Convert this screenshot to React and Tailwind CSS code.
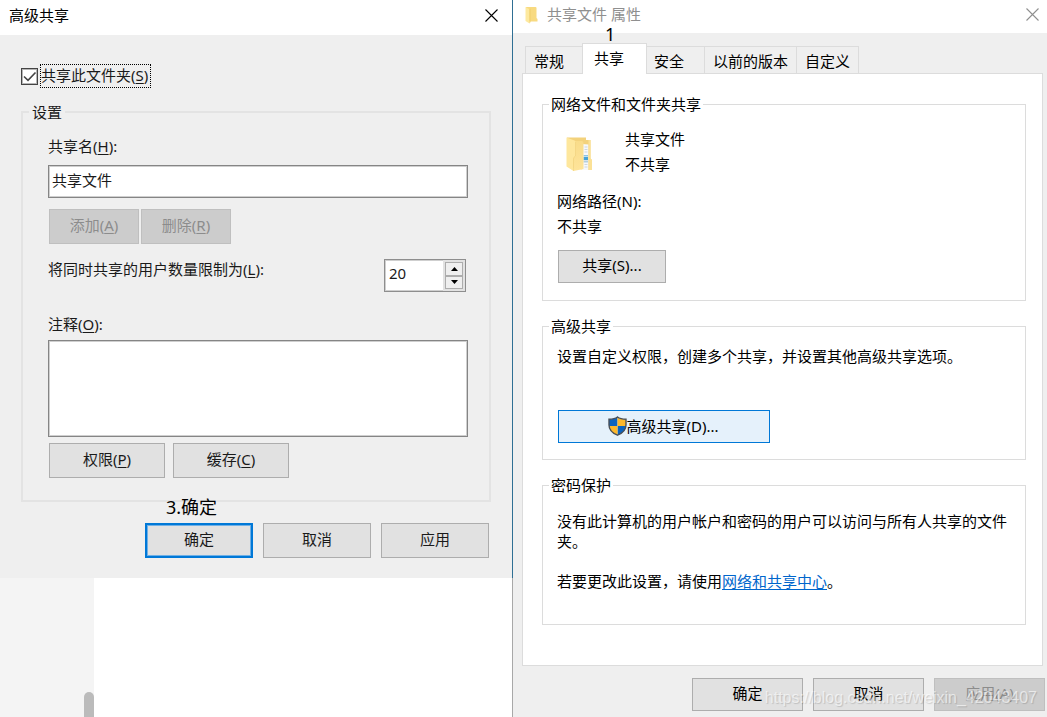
import { useState } from "react";
import clsx from "clsx";

const tabs = ["常规", "共享", "安全", "以前的版本", "自定义"];

function CloseIcon() {
  return (
    <svg width="13" height="13" viewBox="0 0 13 13" fill="none" stroke="currentColor" strokeWidth="1.1">
      <path d="M0.5 0.5 L12.5 12.5 M12.5 0.5 L0.5 12.5" />
    </svg>
  );
}

function SmallFolderIcon() {
  return (
    <svg width="13" height="18" viewBox="0 0 13 18">
      <path d="M1 1 H10.5 Q11.5 1 11.5 2 V12 L12.5 13 V15.5 H3 Z" fill="#f8da80" />
      <path d="M0.5 1 L4.5 3.2 V17.5 L0.5 15 Z" fill="#fde99f" />
      <path d="M4.5 3.2 L5.5 2.6 V16 L4.5 17.5 Z" fill="#efcd6a" />
    </svg>
  );
}

function FolderIcon() {
  return (
    <svg width="28" height="36" viewBox="0 0 28 36">
      <defs>
        <linearGradient id="front" x1="0" y1="0" x2="0" y2="1">
          <stop offset="0" stopColor="#f9dc8a" />
          <stop offset="1" stopColor="#fee49a" />
        </linearGradient>
      </defs>
      <path d="M2 1.5 H21 V4 H25.5 V22.5 L27 24 V34 H20 L4 31 Z" fill="#f3d27c" />
      <path d="M17 8 L23.5 8.5 V34 H17 Z" fill="#f6f8fb" />
      <path d="M19.5 11 h3 M19.5 13.5 h3 M19.5 16 h3 M19.5 31 h3 M19.5 28.5 h3" stroke="#cdd6de" strokeWidth="1" />
      <path d="M18.5 19 h4.5 v1.5 h-4.5 z" fill="#8cc4e4" />
      <path d="M18.5 21 h4.5 v3 h-4.5 z" fill="#46a3d9" />
      <path d="M18.5 24.5 h4.5 v2 h-4.5 z" fill="#b4cfdc" />
      <path d="M23.5 4 H25.5 V22.5 L27 24 V34 H23.5 Z" fill="#fbe196" />
      <path d="M9 5 L17 5 Q18.5 5.5 18.5 7 V33 L8.5 35 Z" fill="url(#front)" />
      <path d="M1.5 1.5 L9.5 4.5 Q10.5 5 10.5 6.5 V20 Q8.5 21 8.5 23 V35 L1.5 30.5 Z" fill="#fee79d" />
      <path d="M8.5 35 V23 Q8.5 21 10.5 20 V6" stroke="#f3d481" strokeWidth="0.8" fill="none" />
    </svg>
  );
}

function ShieldIcon() {
  return (
    <svg width="19" height="20" viewBox="0 0 19 20">
      <defs>
        <clipPath id="shield">
          <path d="M9.5 1 C7.5 2.6 4.5 3.3 1 3.3 V9 C1 14 4.5 17.2 9.5 19.2 C14.5 17.2 18 14 18 9 V3.3 C14.5 3.3 11.5 2.6 9.5 1 Z" />
        </clipPath>
      </defs>
      <g clipPath="url(#shield)">
        <path d="M0 0 H9.5 V10 H0 Z M9.5 10 H19 V20 H9.5 Z" fill="#0b63c0" />
        <path d="M9.5 0 H19 V10 H9.5 Z M0 10 H9.5 V20 H0 Z" fill="#fdb82c" />
      </g>
      <path
        d="M9.5 1 C7.5 2.6 4.5 3.3 1 3.3 V9 C1 14 4.5 17.2 9.5 19.2 C14.5 17.2 18 14 18 9 V3.3 C14.5 3.3 11.5 2.6 9.5 1 Z"
        fill="none"
        stroke="#4a5058"
        strokeWidth="1.4"
      />
    </svg>
  );
}

function Button({ className, primary, disabled, children }) {
  return (
    <button
      type="button"
      disabled={disabled}
      className={clsx(
        "flex items-center justify-center pb-[3px]",
        primary && "border-2 border-[#0078d7] bg-[#e1e1e1] shadow-[inset_0_0_0_1px_#6fb0e6]",
        !primary && !disabled && "border border-[#adadad] bg-[#e1e1e1]",
        disabled && "border border-[#bfbfbf] bg-[#cccccc] text-[#8c8c8c]",
        className
      )}
    >
      {children}
    </button>
  );
}

// Subrayado de la tecla de acceso
function Key({ children }) {
  return (
    <span>
      (<span className="underline underline-offset-2">{children}</span>)
    </span>
  );
}

function AdvancedDialog() {
  const [shared, setShared] = useState(true);
  const [limit, setLimit] = useState(20);

  return (
    <section className="border-r border-[#2f6f94] bg-[#efefef] text-[#1a1a1a]">
      <header className="flex h-[35px] items-center justify-between bg-white pr-[14px] pb-1 pl-[9px] text-black">
        <h2 className="pb-[2px]">高级共享</h2>
        <button type="button" aria-label="关闭">
          <CloseIcon />
        </button>
      </header>

      <div className="px-[21px] pt-[29px] pb-5">
        <label className="flex w-fit items-center gap-[2px]">
          <span className="grid">
            <input
              type="checkbox"
              checked={shared}
              onChange={(e) => setShared(e.target.checked)}
              className="col-start-1 row-start-1 size-[17px] appearance-none border border-[#444444] bg-white shadow-[inset_0_0_0_1px_#b5b5b5]"
            />
            {shared && (
              <svg className="pointer-events-none col-start-1 row-start-1" width="17" height="17" viewBox="0 0 17 17">
                <path d="M3 8.5 L7 12.3 L14.5 4.5" fill="none" stroke="#444444" strokeWidth="1.6" />
              </svg>
            )}
          </span>
          <span className="flex h-6 items-center border border-dotted border-black pr-[2px] pb-[2px]">
            共享此文件夹<Key>S</Key>
          </span>
        </label>

        <fieldset className="mt-[14px] border-2 border-[#e3e3e3]">
          <legend className="ml-[6px] px-[3px]">设置</legend>
          <div className="pt-[14px] pr-[21px] pb-[22px] pl-[25px]">
            <label htmlFor="share-name" className="block">
              共享名<Key>H</Key>:
            </label>
            <input
              id="share-name"
              type="text"
              defaultValue="共享文件"
              className="mt-[9px] block h-[33px] w-full border border-[#858585] bg-white px-[3px] pb-[5px] shadow-[inset_0_0_0_1px_#cfcfcf]"
            />
            <div className="mt-[11px] flex gap-[2px] px-px">
              <Button disabled className="h-[35px] w-[90px]">添加<Key>A</Key></Button>
              <Button disabled className="h-[35px] w-[90px]">删除<Key>R</Key></Button>
            </div>

            <div className="mt-[15px] flex items-start justify-between pr-[2px]">
              <label htmlFor="limit">
                将同时共享的用户数量限制为<Key>L</Key>:
              </label>
              <div className="flex h-[33px] w-[82px] border border-[#8e8e8e] bg-white shadow-[inset_0_0_0_1px_#cfcfcf]">
                <input
                  id="limit"
                  type="text"
                  value={limit}
                  onChange={(e) => setLimit(Number(e.target.value) || 0)}
                  className="min-w-0 flex-1 px-1 pb-[5px]"
                />
                <div className="flex w-[22px] flex-col bg-[#e2e2e2] p-[2px]">
                  <button
                    type="button"
                    aria-label="增加"
                    onClick={() => setLimit(limit + 1)}
                    className="flex flex-1 items-center justify-center border border-[#adadad] bg-[#efefef]"
                  >
                    <svg width="7" height="4" viewBox="0 0 7 4"><path d="M3.5 0 L7 4 H0 Z" /></svg>
                  </button>
                  <button
                    type="button"
                    aria-label="减少"
                    onClick={() => setLimit(limit - 1)}
                    className="flex flex-1 items-center justify-center border border-[#adadad] bg-[#efefef]"
                  >
                    <svg width="7" height="4" viewBox="0 0 7 4"><path d="M0 0 H7 L3.5 4 Z" /></svg>
                  </button>
                </div>
              </div>
            </div>

            <label htmlFor="comment" className="mt-[22px] block">
              注释<Key>O</Key>:
            </label>
            <textarea
              id="comment"
              className="mt-[6px] block h-[97px] w-full resize-none border border-[#858585] bg-white px-1 shadow-[inset_0_0_0_1px_#cfcfcf]"
            />
            <div className="mt-[6px] flex gap-2 px-px">
              <Button className="h-[35px] w-[116px]">权限<Key>P</Key></Button>
              <Button className="h-[35px] w-[116px]">缓存<Key>C</Key></Button>
            </div>
          </div>
        </fieldset>

        <div className="relative mt-[21px] flex justify-end gap-[10px] px-[2px]">
          <span className="absolute bottom-full left-[145px] text-[18px] leading-[32px] text-black">3.确定</span>
          <Button primary className="h-[35px] w-[108px]">确定</Button>
          <Button className="h-[35px] w-[108px]">取消</Button>
          <Button className="h-[35px] w-[108px]">应用</Button>
        </div>
      </div>
    </section>
  );
}

function Group({ title, className, children }) {
  return (
    <fieldset className="border border-[#dcdcdc]">
      <legend className="ml-[6px] px-[2px]">{title}</legend>
      <div className={clsx("px-[14px]", className)}>{children}</div>
    </fieldset>
  );
}

function PropertiesDialog() {
  const [active, setActive] = useState("共享");

  return (
    <section className="relative flex flex-1 flex-col bg-[#efefef]">
      <header className="flex h-[33px] items-center justify-between bg-white pr-2 pb-1 pl-3 text-[#8f8f8f]">
        <div className="flex items-center gap-[9px]">
          <SmallFolderIcon />
          <h2 className="pb-[2px]">共享文件 属性</h2>
        </div>
        <button type="button" aria-label="关闭">
          <CloseIcon />
        </button>
      </header>
      <span className="absolute top-6 left-[92px] text-[18px] leading-5">1</span>

      <div className="flex flex-1 flex-col pt-[10px] pr-1 pb-[6px] pl-[9px]">
        <div role="tablist" className="flex items-end pl-[3px]">
          {tabs.map((tab, i) => (
            <button
              key={tab}
              type="button"
              role="tab"
              aria-selected={tab === active}
              onClick={() => setActive(tab)}
              className={clsx(
                "border-t border-l border-[#dcdcdc] text-left",
                tab === active
                  ? "z-10 -mx-[2px] -mb-px h-[31px] min-w-[65px] border-r bg-white px-[11px] pb-[2px]"
                  : "h-[27px] min-w-[59px] px-2 pt-[2px]",
                i === tabs.length - 1 && "border-r"
              )}
            >
              {tab}
            </button>
          ))}
        </div>

        <div className="flex flex-1 flex-col gap-[15px] border border-[#dcdcdc] bg-white pt-5 pr-4 pb-10 pl-[19px]">
          <Group title="网络文件和文件夹共享" className="pt-[13px] pb-[17px]">
            <div className="flex gap-8 pl-2 leading-[25px]">
              <div className="pt-[9px]">
                <FolderIcon />
              </div>
              <div>
                <p>共享文件</p>
                <p>不共享</p>
              </div>
            </div>
            <div className="mt-3 leading-[25px]">
              <p>网络路径(N):</p>
              <p>不共享</p>
            </div>
            <Button className="mt-[11px] ml-px h-[33px] w-[108px]">共享(S)...</Button>
          </Group>

          <Group title="高级共享" className="pt-[10px] pb-4">
            <p>设置自定义权限，创建多个共享，并设置其他高级共享选项。</p>
            <button
              type="button"
              className="mt-11 ml-px flex h-[33px] w-[212px] items-center justify-center border border-[#0078d7] bg-[#e5f1fb] pr-[2px] pb-[2px]"
            >
              <ShieldIcon />
              高级共享(D)...
            </button>
          </Group>

          <Group title="密码保护" className="pt-4 pb-[33px]">
            <p>没有此计算机的用户帐户和密码的用户可以访问与所有人共享的文件夹。</p>
            <p className="mt-5">
              若要更改此设置，请使用
              <a href="#" className="text-[#0066cc] underline underline-offset-2">网络和共享中心</a>。
            </p>
          </Group>
        </div>

        <div className="-mr-[2px] mt-3 flex justify-end gap-[10px]">
          <Button className="h-[33px] w-[111px]">确定</Button>
          <Button className="h-[33px] w-[111px]">取消</Button>
          <Button disabled className="h-[33px] w-[111px]">应用(A)</Button>
        </div>
      </div>

      <span className="pointer-events-none absolute right-[10px] bottom-[9px] font-['Liberation_Sans'] text-[16px] leading-5 text-white/60 [text-shadow:1px_1px_1px_rgba(0,0,0,0.15)]">
        https://blog.csdn.net/weixin_42043407
      </span>
    </section>
  );
}

export default function App() {
  return (
    <main
      lang="zh-CN"
      className="flex min-h-screen bg-white font-['Noto_Sans','Noto_Sans_CJK_SC',sans-serif] text-[15px] leading-5 text-black"
    >
      <div className="flex w-[49%] flex-col">
        <AdvancedDialog />
        <div className="flex flex-1 border-r border-[#a8a8a8]">
          <div className="flex w-[94px] items-end justify-end bg-[#f4f4f4]">
            <div className="h-[25px] w-[10px] rounded-t-full bg-[#bbbbbb]" />
          </div>
        </div>
      </div>
      <PropertiesDialog />
    </main>
  );
}
